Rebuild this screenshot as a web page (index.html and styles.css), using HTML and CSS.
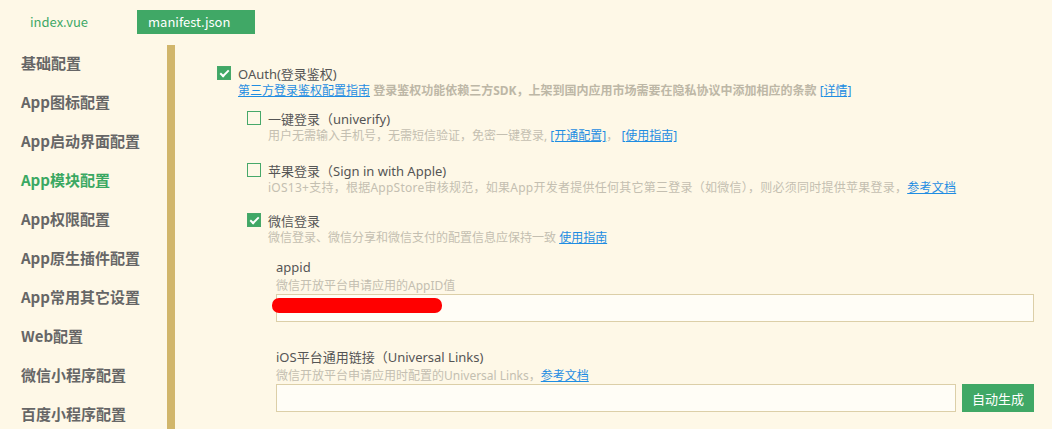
FILE: index.html
```html
<!DOCTYPE html>
<html lang="zh-CN">
<head>
<meta charset="utf-8">
<title>manifest.json</title>
<link rel="stylesheet" href="styles.css">
</head>
<body>
<div class="tabs">
  <div class="tab">index.vue</div>
  <div class="tab active">manifest.json</div>
</div>
<div class="main">
  <ul class="sidebar">
    <li>基础配置</li>
    <li>App图标配置</li>
    <li>App启动界面配置</li>
    <li class="current">App模块配置</li>
    <li>App权限配置</li>
    <li>App原生插件配置</li>
    <li>App常用其它设置</li>
    <li>Web配置</li>
    <li>微信小程序配置</li>
    <li>百度小程序配置</li>
  </ul>
  <div class="content">
    <div class="item">
      <div class="title"><span class="cb checked"></span>OAuth(登录鉴权)</div>
      <div class="desc desc-root"><a class="link">第三方登录鉴权配置指南</a> <b>登录鉴权功能依赖三方SDK，上架到国内应用市场需要在隐私协议中添加相应的条款</b> <a class="link">[详情]</a></div>
    </div>
    <div class="sub">
      <div class="item i1">
        <div class="title"><span class="cb"></span>一键登录（univerify)</div>
        <div class="desc">用户无需输入手机号，无需短信验证，免密一键登录, <a class="link">[开通配置]</a>， <a class="link">[使用指南]</a></div>
      </div>
      <div class="item i2">
        <div class="title"><span class="cb"></span>苹果登录（Sign in with Apple)</div>
        <div class="desc desc-wide">iOS13+支持，根据AppStore审核规范，如果App开发者提供任何其它第三登录（如微信），则必须同时提供苹果登录，<a class="link">参考文档</a></div>
      </div>
      <div class="item i3">
        <div class="title"><span class="cb checked"></span>微信登录</div>
        <div class="desc">微信登录、微信分享和微信支付的配置信息应保持一致 <a class="link">使用指南</a></div>
      </div>
      <div class="fields">
        <div class="field">
          <div class="label">appid</div>
          <div class="hint">微信开放平台申请应用的AppID值</div>
          <div class="input-row">
            <div class="input"><span class="redact"></span></div>
          </div>
        </div>
        <div class="field f2">
          <div class="label">iOS平台通用链接（Universal Links)</div>
          <div class="hint">微信开放平台申请应用时配置的Universal Links，<a class="link">参考文档</a></div>
          <div class="input-row">
            <div class="input"></div>
            <button class="btn">自动生成</button>
          </div>
        </div>
      </div>
    </div>
  </div>
</div>
</body>
</html>
```

FILE: styles.css
```css
* { box-sizing: border-box; }
html, body { margin: 0; padding: 0; }
body {
  background: #fef8e7;
  font-family: "Noto Sans CJK SC", "Noto Sans", sans-serif;
  color: #555;
  width: 1052px;
  height: 429px;
  overflow: hidden;
}
.tabs {
  height: 45px;
  display: flex;
  align-items: flex-start;
  padding-top: 10px;
}
.tab {
  font-size: 13px;
  height: 24px;
  line-height: 24px;
  color: #3fa866;
}
.tab:first-child { margin-left: 30px; margin-right: 49px; }
.tab.active {
  background: #40a866;
  color: #fff;
  padding: 0 26px 0 11px;
  width: 118px;
}
.main { display: flex; }
.sidebar {
  list-style: none;
  margin: -2px 0 0 0;
  padding: 0;
  width: 167px;
  flex: none;
}
.sidebar li {
  height: 39px;
  line-height: 39px;
  padding-left: 21px;
  font-size: 15px;
  font-weight: bold;
  color: #666;
  white-space: nowrap;
}
.sidebar li.current { color: #3aa862; }
.content {
  flex: 1;
  border-left: 8px solid #d1b66b;
  min-height: 400px;
  padding: 18px 0 0 42px;
  font-family: "Noto Sans", "Noto Sans CJK SC", sans-serif;
}
.title {
  display: flex;
  align-items: center;
  height: 20px;
  font-size: 13px;
  color: #555;
  white-space: nowrap;
}
.cb {
  width: 14px;
  height: 14px;
  border: 1px solid #47a86a;
  margin-right: 7px;
  flex: none;
  position: relative;
}
.cb.checked { background: #40a866; }
.cb.checked::after {
  content: "";
  position: absolute;
  left: 4px;
  top: 1px;
  width: 3px;
  height: 7px;
  border: solid #fff;
  border-width: 0 2px 2px 0;
  transform: rotate(45deg);
}
.desc, .hint {
  font-size: 12px;
  line-height: 16px;
  height: 16px;
  color: #c4bfb1;
  white-space: nowrap;
}
.desc { padding-left: 21px; }
.desc-wide { letter-spacing: 0.25px; }
.desc-root b { color: #bdb7a6; font-weight: bold; }
.link {
  color: #1f8de2;
  text-decoration: underline;
}
.sub { padding-left: 30px; }
.i1 { margin-top: 9px; }
.i2 { margin-top: 16px; }
.i3 { margin-top: 14px; }
.fields { padding-left: 29px; padding-right: 18px; margin-top: 11px; }
.f2 { margin-top: 25px; }
.label {
  font-size: 13px;
  line-height: 20px;
  color: #555;
}
.hint { height: 17px; line-height: 17px; }
.input-row { display: flex; gap: 6px; }
.input {
  flex: 1;
  height: 28px;
  background: #fffdf6;
  border: 1px solid #dccfa8;
  position: relative;
}
.redact {
  position: absolute;
  left: -5px;
  top: 3px;
  width: 170px;
  height: 15px;
  background: #ff0000;
  border-radius: 7px;
}
.btn {
  width: 72px;
  height: 28px;
  border: none;
  background: #40a866;
  color: #fff;
  font-family: inherit;
  font-size: 13px;
  padding: 0;
}
```
